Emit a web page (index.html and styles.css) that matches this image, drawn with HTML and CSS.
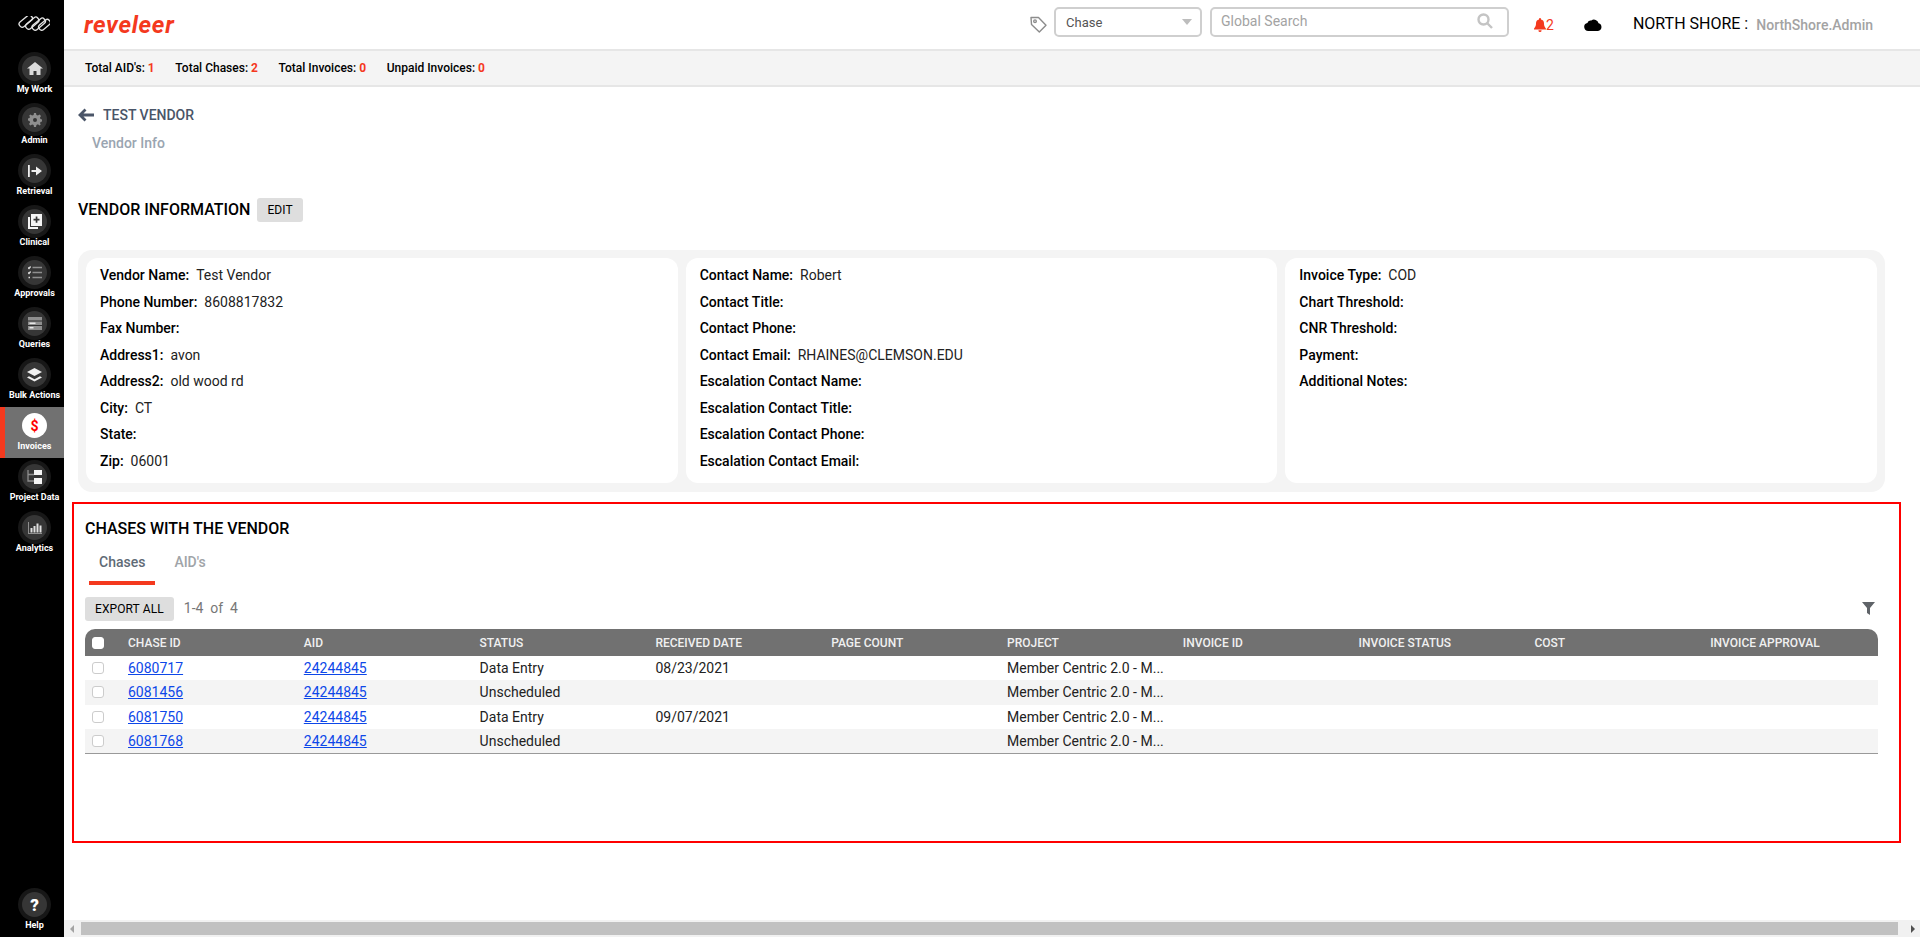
FILE: index.html
```html
<!DOCTYPE html>
<html lang="en">
<head>
<meta charset="utf-8">
<title>Reveleer - Test Vendor</title>
<link rel="stylesheet" href="styles.css">
</head>
<body>
<div class="app">
  <aside class="sidebar">
    <div class="brand">
      <svg width="36" height="18" viewBox="0 0 36 18" fill="none" stroke="#e4e4e4" stroke-width="1.300"><rect x="0" y="-3" width="15" height="6" rx="2.500" transform="translate(6 10) rotate(-40)"/><rect x="0" y="-3" width="15" height="6" rx="2.500" transform="translate(12.500 12) rotate(-40)"/><rect x="0" y="-3" width="15" height="6" rx="2.500" transform="translate(19 13) rotate(-40)"/><rect x="0" y="-3" width="13" height="6" rx="2.500" transform="translate(25.500 13) rotate(-40)"/></svg>
    </div>
    <a class="nav-item"><span class="nav-ring"><span class="nav-disc"><svg width="16" height="13" viewBox="0 0 16 13"><path fill="#dcdcdc" d="M8 0 L16 6.500 H13.500 V13 H9.500 V9 H6.500 V13 H2.500 V6.500 H0 Z"/></svg></span></span><span class="nav-label">My Work</span></a>
    <a class="nav-item"><span class="nav-ring"><span class="nav-disc"><svg width="14" height="14" viewBox="0 0 14 14"><path fill="#8f8f8f" fill-rule="evenodd" d="M6 0h2l.4 2 1.500.6L11.600 1.500 13 3l-1.100 1.700.6 1.300 1.500.5v2l-1.500.4-.6 1.500L13 11l-1.400 1.400-1.700-1.100-1.500.6L8 14H6l-.4-2-1.500-.6L2.400 12.500 1 11l1.100-1.600-.6-1.500L0 7.500v-2l1.500-.5.6-1.300L1 3l1.400-1.500 1.700 1.100 1.500-.6zM7 5a2 2 0 1 0 0 4 2 2 0 0 0 0-4z"/></svg></span></span><span class="nav-label">Admin</span></a>
    <a class="nav-item"><span class="nav-ring"><span class="nav-disc"><svg width="14" height="12" viewBox="0 0 14 12"><path fill="#f0f0f0" d="M0 0h1.800v12H0zM3.500 5H8V1.500L14 6 8 10.500V7H3.500z"/></svg></span></span><span class="nav-label">Retrieval</span></a>
    <a class="nav-item"><span class="nav-ring"><span class="nav-disc"><svg width="14" height="15" viewBox="0 0 14 15"><path fill="#f5f5f5" d="M0 3h2v10h8v2H0z"/><path fill="#f5f5f5" fill-rule="evenodd" d="M3 0h11v12H3zM7.700 2.500v2.300H5.500v1.700h2.200v2.300h1.700V6.500h2.100V4.800H9.400V2.500z"/></svg></span></span><span class="nav-label">Clinical</span></a>
    <a class="nav-item"><span class="nav-ring"><span class="nav-disc"><svg width="14" height="13" viewBox="0 0 14 13" fill="none" stroke="#e0e0e0" stroke-width="1.300"><path d="M0 1.500l1 1 1.600-2M0 6.500l1 1 1.600-2M.5 11.500h1.500"/><path stroke="#8f8f8f" stroke-width="1.600" d="M4.500 1.500H14M4.500 6.500H14M4.500 11.500H14"/></svg></span></span><span class="nav-label">Approvals</span></a>
    <a class="nav-item"><span class="nav-ring"><span class="nav-disc"><svg width="14" height="13" viewBox="0 0 14 13"><path fill="#8f8f8f" d="M0 0h14v13H0z"/><path fill="#2f2f2f" d="M0 3.500h14v1H0zM0 8h14v1H0z"/><path fill="#e8e8e8" d="M1.500 5.500h6v1.500h-6zM1.500 10h4v1.500h-4z"/></svg></span></span><span class="nav-label">Queries</span></a>
    <a class="nav-item"><span class="nav-ring"><span class="nav-disc"><svg width="15" height="14" viewBox="0 0 15 14"><path fill="#f0f0f0" d="M7.500 0L15 4 7.500 8 0 4z"/><path fill="#f0f0f0" d="M2 6.800L7.500 9.700 13 6.800 15 8 7.500 12 0 8z" transform="translate(0 1.500)"/></svg></span></span><span class="nav-label">Bulk Actions</span></a>
    <a class="nav-item nav-item-active"><span class="nav-ring"><span class="nav-disc nav-disc-active">$</span></span><span class="nav-label">Invoices</span></a>
    <a class="nav-item"><span class="nav-ring"><span class="nav-disc"><svg width="15" height="14" viewBox="0 0 15 14"><path fill="none" stroke="#8f8f8f" stroke-width="1.300" d="M1 0v11h6M1 4.500h6"/><path fill="#f5f5f5" d="M7 0h8v5H7zM7 8h8v6H7z"/></svg></span></span><span class="nav-label">Project Data</span></a>
    <a class="nav-item"><span class="nav-ring"><span class="nav-disc"><svg width="14" height="12" viewBox="0 0 14 12"><path fill="#8f8f8f" d="M0 0h1v11h13v1H0z"/><path fill="#e0e0e0" d="M2.500 6h2v4.500h-2zM5.500 4h2v6.500h-2zM8.500 1.500h2v9h-2zM11.500 3.500h2v7h-2z"/></svg></span></span><span class="nav-label">Analytics</span></a>
    <a class="nav-item nav-item-help"><span class="nav-ring"><span class="nav-disc nav-disc-help">?</span></span><span class="nav-label">Help</span></a>
  </aside>

  <div class="main">
    <header class="topbar">
      <span class="logo">reveleer</span>
      <div class="topbar-right">
        <svg class="tag-icon" width="17" height="17" viewBox="0 0 17 17" fill="none" stroke="#8c8c8c" stroke-width="1.400" stroke-linejoin="round"><path d="M1 1.500h7.500l7.500 7.800-6.700 6.700L1.500 8.500z"/><circle cx="5" cy="5.200" r="1.300"/></svg>
        <div class="select-box"><span>Chase</span><i class="caret"></i></div>
        <div class="search-box"><span>Global Search</span>
          <svg width="16" height="16" viewBox="0 0 16 16" fill="none" stroke="#c4c4c4" stroke-width="2.400"><circle cx="6.500" cy="6.500" r="5"/><path d="M10.500 10.500L15 15"/></svg>
        </div>
        <div class="bell">
          <svg width="12" height="14" viewBox="0 0 12 14"><path fill="#f4391e" d="M6 0a1 1 0 0 1 1 1v.6A4 4 0 0 1 10 5.500c0 3.500 2 4.500 2 5.500v.5H0V11c0-1 2-2 2-5.500a4 4 0 0 1 3-3.900V1a1 1 0 0 1 1-1zM4.500 12.300h3A1.500 1.500 0 0 1 6 14a1.500 1.500 0 0 1-1.500-1.700z"/></svg><span>2</span>
        </div>
        <svg class="cloud" width="18" height="13" viewBox="0 0 18 13"><path fill="#000" d="M4.300 13A4.100 4.100 0 0 1 3.400 4.900 3.300 3.300 0 0 1 7.300 2.500 4.700 4.700 0 0 1 14.600 5.200 4 4 0 0 1 14 13z"/></svg>
        <span class="org">NORTH SHORE :</span>
        <span class="user">NorthShore.Admin</span>
      </div>
    </header>

    <div class="stats">
      <span class="stat">Total AID's: <b>1</b></span>
      <span class="stat">Total Chases: <b>2</b></span>
      <span class="stat">Total Invoices: <b>0</b></span>
      <span class="stat">Unpaid Invoices: <b>0</b></span>
    </div>

    <main class="content">
      <div class="crumb">
        <svg width="16" height="14" viewBox="0 0 16 14" fill="none" stroke="#4a5568" stroke-width="2.800"><path d="M7.500 1.500L2 7l5.500 5.500M2.500 7H16"/></svg>
        <span>TEST VENDOR</span>
      </div>
      <div class="subcrumb">Vendor Info</div>

      <div class="section-head">
        <h2 class="section-title">VENDOR INFORMATION</h2>
        <button class="btn">EDIT</button>
      </div>

      <div class="info-panel">
        <div class="info-card">
          <div class="info-row"><b>Vendor Name:</b><span>Test Vendor</span></div>
          <div class="info-row"><b>Phone Number:</b><span>8608817832</span></div>
          <div class="info-row"><b>Fax Number:</b></div>
          <div class="info-row"><b>Address1:</b><span>avon</span></div>
          <div class="info-row"><b>Address2:</b><span>old wood rd</span></div>
          <div class="info-row"><b>City:</b><span>CT</span></div>
          <div class="info-row"><b>State:</b></div>
          <div class="info-row"><b>Zip:</b><span>06001</span></div>
        </div>
        <div class="info-card">
          <div class="info-row"><b>Contact Name:</b><span>Robert</span></div>
          <div class="info-row"><b>Contact Title:</b></div>
          <div class="info-row"><b>Contact Phone:</b></div>
          <div class="info-row"><b>Contact Email:</b><span>RHAINES@CLEMSON.EDU</span></div>
          <div class="info-row"><b>Escalation Contact Name:</b></div>
          <div class="info-row"><b>Escalation Contact Title:</b></div>
          <div class="info-row"><b>Escalation Contact Phone:</b></div>
          <div class="info-row"><b>Escalation Contact Email:</b></div>
        </div>
        <div class="info-card">
          <div class="info-row"><b>Invoice Type:</b><span>COD</span></div>
          <div class="info-row"><b>Chart Threshold:</b></div>
          <div class="info-row"><b>CNR Threshold:</b></div>
          <div class="info-row"><b>Payment:</b></div>
          <div class="info-row"><b>Additional Notes:</b></div>
        </div>
      </div>

      <section class="chases">
        <h2 class="section-title chases-title">CHASES WITH THE VENDOR</h2>
        <div class="tabs">
          <span class="tab tab-active">Chases</span>
          <span class="tab">AID's</span>
        </div>
        <div class="toolbar">
          <button class="btn">EXPORT ALL</button>
          <span class="count">1-4 &nbsp;of &nbsp;4</span>
          <svg class="filter" width="13" height="13" viewBox="0 0 13 13"><path fill="#5f6368" d="M0 0h13L8 6v7L5 11V6z"/></svg>
        </div>
        <div class="grid">
          <div class="grid-row grid-head">
            <span class="cell-check"><i class="check check-head"></i></span>
            <span>CHASE ID</span><span>AID</span><span>STATUS</span><span>RECEIVED DATE</span><span>PAGE COUNT</span><span>PROJECT</span><span>INVOICE ID</span><span>INVOICE STATUS</span><span>COST</span><span>INVOICE APPROVAL</span>
          </div>
          <div class="grid-row">
            <span class="cell-check"><i class="check"></i></span>
            <span><a href="#">6080717</a></span><span><a href="#">24244845</a></span><span>Data Entry</span><span>08/23/2021</span><span></span><span>Member Centric 2.0 - M...</span><span></span><span></span><span></span><span></span>
          </div>
          <div class="grid-row grid-alt">
            <span class="cell-check"><i class="check"></i></span>
            <span><a href="#">6081456</a></span><span><a href="#">24244845</a></span><span>Unscheduled</span><span></span><span></span><span>Member Centric 2.0 - M...</span><span></span><span></span><span></span><span></span>
          </div>
          <div class="grid-row">
            <span class="cell-check"><i class="check"></i></span>
            <span><a href="#">6081750</a></span><span><a href="#">24244845</a></span><span>Data Entry</span><span>09/07/2021</span><span></span><span>Member Centric 2.0 - M...</span><span></span><span></span><span></span><span></span>
          </div>
          <div class="grid-row grid-alt">
            <span class="cell-check"><i class="check"></i></span>
            <span><a href="#">6081768</a></span><span><a href="#">24244845</a></span><span>Unscheduled</span><span></span><span></span><span>Member Centric 2.0 - M...</span><span></span><span></span><span></span><span></span>
          </div>
        </div>
      </section>
    </main>

    <div class="hscroll">
      <i class="arrow arrow-left"></i>
      <div class="hthumb"></div>
      <i class="arrow arrow-right"></i>
    </div>
  </div>
</div>
</body>
</html>
```
FILE: styles.css
```css
* { box-sizing: border-box; }
html, body { margin: 0; height: 100%; overflow: hidden; }
body { font-family: Roboto, "Liberation Sans", sans-serif; font-size: 14px; color: #000; background: #fff; }
.app { display: flex; height: 937px; }

/* sidebar */
.sidebar { width: 64px; flex: none; background: #000; display: flex; flex-direction: column; }
.brand { height: 50px; display: flex; align-items: center; justify-content: center; }
.nav-item { height: 51px; display: flex; flex-direction: column; align-items: center; padding-top: 2px; border-left: 5px solid transparent; }
.nav-item-active { background: #717171; border-left-color: #f4391e; }
.nav-ring { width: 33px; height: 33px; border-radius: 50%; background: #171717; display: flex; align-items: center; justify-content: center; flex: none; }
.nav-disc { width: 25px; height: 25px; border-radius: 50%; background: #363636; display: flex; align-items: center; justify-content: center; }
.nav-disc-active { background: #fff; color: #f00; font-weight: 700; font-size: 14px; }
.nav-disc-help { color: #fff; font-weight: 900; font-size: 17px; }
.nav-item-active .nav-ring { background: transparent; }
.nav-label { font-size: 9px; font-weight: 700; color: #fff; line-height: 11px; margin-top: -1px; white-space: nowrap; }
.nav-item-help { margin-top: auto; }

/* main */
.main { flex: 1; min-width: 0; display: flex; flex-direction: column; }
.topbar { height: 51px; flex: none; border-bottom: 2px solid #e6e6e6; display: flex; align-items: center; padding: 0 47px 0 20px; }
.logo { font-style: italic; font-weight: 700; font-size: 24px; color: #f4391e; letter-spacing: 0.7px; }
.topbar-right { margin-left: auto; display: flex; align-items: center; height: 100%; }
.tag-icon { margin-right: 7px; }
.select-box { width: 148px; height: 30px; margin-bottom: 5px; border: 2px solid #cfcfcf; border-radius: 5px; display: flex; align-items: center; justify-content: space-between; padding: 0 8px 0 10px; font-size: 13px; color: #555; }
.caret { width: 0; height: 0; border-left: 5px solid transparent; border-right: 5px solid transparent; border-top: 6px solid #bdbdbd; }
.search-box { width: 299px; height: 30px; margin-left: 8px; margin-bottom: 5px; border: 2px solid #cfcfcf; border-radius: 5px; display: flex; align-items: center; justify-content: space-between; padding: 0 14px 2px 9px; color: #a3a3a3; font-size: 14px; }
.bell { margin-left: 25px; display: flex; align-items: center; color: #f4391e; font-size: 14px; }
.cloud { margin-left: 30px; }
.org { margin-left: 31px; font-size: 16px; white-space: nowrap; margin-bottom: 3px; }
.user { margin-left: 8px; font-size: 14px; font-weight: 500; color: #a3a3a3; white-space: nowrap; padding-top: 1px; }

.stats { height: 36px; flex: none; background: #f4f4f4; border-bottom: 2px solid #e6e6e6; display: flex; align-items: center; padding: 0 0 0 21px; gap: 20.600px; font-size: 12px; font-weight: 500; }
.stat b { color: #f4391e; font-weight: 700; }

.content { flex: 1; min-height: 0; padding: 18px 35px 0 14px; }
.crumb { height: 20px; display: flex; align-items: center; gap: 9px; font-weight: 500; color: #4a5568; }
.subcrumb { height: 20px; margin: 8px 0 0 14px; line-height: 20px; font-weight: 500; color: #9aa5b1; }
.section-head { margin-top: 45px; height: 24px; display: flex; align-items: center; gap: 7px; }
.section-title { margin: 0; font-size: 16px; font-weight: 500; line-height: 20px; }
.btn { height: 24px; border: 0; border-radius: 3px; background: #dedede; color: #000; font: 400 12px Roboto, sans-serif; letter-spacing: 0.1px; padding: 0 10px; }

.info-panel { margin-top: 28px; padding: 8px 8px 9px; background: #f4f4f4; border-radius: 14px; display: grid; grid-template-columns: repeat(3, 1fr); gap: 8px; }
.info-card { background: #fff; border-radius: 12px; padding: 4px 14px 9px; height: 225px; }
.info-row { height: 26.5px; line-height: 26px; display: flex; gap: 7px; white-space: nowrap; }
.info-row b { font-weight: 500; }
.info-row span { color: #222; }

.chases { margin: 10px -16px 0 -6px; height: 341px; border: 2px solid #f00; padding: 15px 21px 0 11px; }
.tabs { margin-top: 9px; display: flex; }
.tab { padding: 4px 10px 9px; margin-left: 4px; line-height: 20px; font-weight: 500; color: #a0a4a8; border-bottom: 4px solid transparent; }
.tab + .tab { margin-left: 9px; }
.tab-active { color: #5f6b76; border-bottom-color: #f4391e; }
.toolbar { margin-top: 12px; height: 24px; display: flex; align-items: center; }
.count { margin-left: 10px; padding-bottom: 2px; color: #777; }
.filter { margin: 0 3px 2px auto; }

.grid { margin-top: 8px; border-bottom: 1px solid #999; color: #222; }
.grid-row { height: 24.300px; display: grid; grid-template-columns: 35px repeat(10, 1fr); align-items: center; }
.grid-row > span { padding: 0 8px; white-space: nowrap; }
.grid-head { height: 27px; background: #717171; color: #f0f0f0; font-size: 12px; font-weight: 500; border-radius: 10px 10px 0 0; }
.grid-alt { background: #f4f4f4; }
.grid-row > .cell-check { padding: 0 0 0 7px; display: flex; align-items: center; }
.check { width: 12px; height: 12px; border: 1px solid #ccc; border-radius: 3px; background: #fff; }
.check-head { border-color: #fff; }
.grid a { color: #0d47e8; text-decoration: underline; }

.hscroll { height: 17px; flex: none; background: #f1f1f1; display: flex; align-items: center; }
.hthumb { flex: 1; height: 13px; background: #c1c1c1; margin: 0 13px 0 3px; }
.arrow { width: 0; height: 0; border-top: 4px solid transparent; border-bottom: 4px solid transparent; flex: none; }
.arrow-left { border-right: 4px solid #a3a3a3; margin-left: 6px; margin-right: 4px; }
.arrow-right { border-left: 4px solid #505050; margin-right: 5px; }
```
